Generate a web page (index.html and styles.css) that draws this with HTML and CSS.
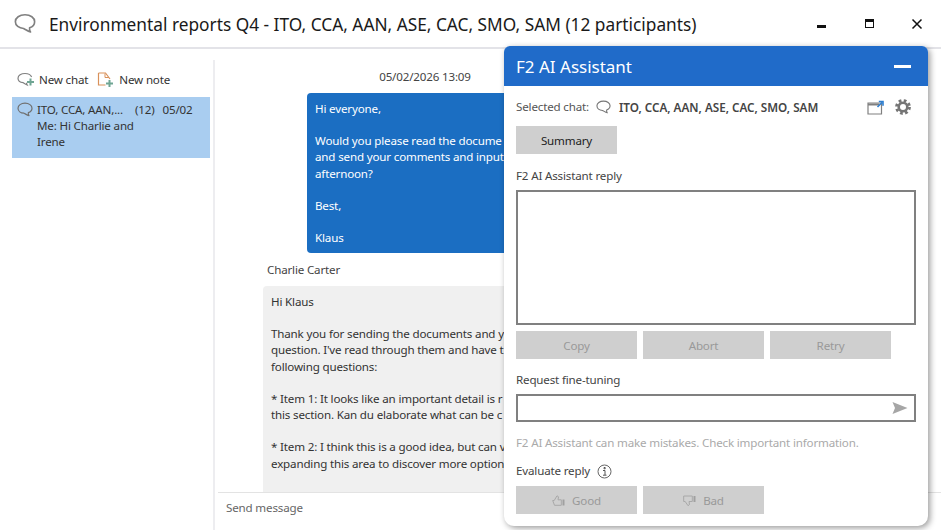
FILE: index.html
```html
<!DOCTYPE html>
<html lang="en">
<head>
<meta charset="utf-8">
<title>Environmental reports Q4</title>
<link rel="stylesheet" href="styles.css">
</head>
<body>
<svg class="defs" width="0" height="0" aria-hidden="true">
  <symbol id="bubble" viewBox="0 0 24 22">
    <path d="M12 1.500C6 1.500 1.500 4.800 1.500 9s3.900 7.300 9 7.500c2.200 1.200 5 3.200 7.500 3.800-1-1.300-1.200-3-1-4.600 3.700-1.300 5.500-3.700 5.500-6.700C22.500 4.800 18 1.500 12 1.500z" fill="none" stroke="currentColor" stroke-width="1.800" stroke-linejoin="round"/>
  </symbol>
</svg>
<div class="app">
  <header class="titlebar">
    <svg class="title-icon"><use href="#bubble"/></svg>
    <h1 class="title">Environmental reports Q4 - ITO, CCA, AAN, ASE, CAC, SMO, SAM (12 participants)</h1>
    <div class="window-controls">
      <span class="win-btn"><span class="win-min"></span></span>
      <span class="win-btn"><span class="win-max"></span></span>
      <span class="win-btn">
        <svg width="12" height="12" viewBox="0 0 12 12"><path d="M1.500 1.500l9 9M10.500 1.500l-9 9" stroke="#111" stroke-width="1.500" fill="none"/></svg>
      </span>
    </div>
  </header>
  <div class="main">
    <aside class="sidebar">
      <div class="toolbar">
        <span class="tool">
          <svg class="tool-icon" viewBox="0 0 18 16">
            <path d="M8 1.500C4.200 1.500 1 3.500 1 6.300c0 2.400 2.300 4.200 5.200 4.400 1.200.8 2.600 1.800 4 2.300-.5-.8-.7-1.500-.6-2.300" fill="none" stroke="#808080" stroke-width="1.200"/>
            <path d="M8 1.500c3.200 0 5.800 1.400 6.600 3.500" fill="none" stroke="#808080" stroke-width="1.200"/>
            <path d="M13.500 6.500v7M10 10h7" stroke="#6fa593" stroke-width="2"/>
          </svg>
          New chat
        </span>
        <span class="tool">
          <svg class="tool-icon" viewBox="0 0 18 16">
            <path d="M1.500 1v12h7M1.500 1h7l3 4 1.500 2" fill="none" stroke="#d9915a" stroke-width="1.200"/>
            <path d="M8 1.500v4h4" fill="none" stroke="#d9915a" stroke-width="1"/>
            <path d="M12.500 8v7M9 11.500h7" stroke="#6fa593" stroke-width="2"/>
          </svg>
          New note
        </span>
      </div>
      <div class="chat-item">
        <svg class="item-icon"><use href="#bubble"/></svg>
        <div class="item-body">
          <div class="item-head"><span class="item-name">ITO, CCA, AAN,...</span><span>(12)</span><span>05/02</span></div>
          <div class="item-preview">Me: Hi Charlie and<br>Irene</div>
        </div>
      </div>
    </aside>
    <section class="chat">
      <div class="messages">
        <div class="timestamp">05/02/2026 13:09</div>
        <div class="bubble bubble-me">Hi everyone,<br><br>Would you please read the docume<br>and send your comments and input<br>afternoon?<br><br>Best,<br><br>Klaus</div>
        <div class="sender">Charlie Carter</div>
        <div class="bubble bubble-other">Hi Klaus<br><br>Thank you for sending the documents and y<br>question. I've read through them and have t<br>following questions:<br><br>* Item 1: It looks like an important detail is r<br>this section. Kan du elaborate what can be c<br><br>* Item 2: I think this is a good idea, but can v<br>expanding this area to discover more option<br><br>* Item 3: How would we go about making this w</div>
      </div>
      <div class="composer">Send message</div>
    </section>
  </div>
  <section class="assistant">
    <div class="assistant-head">
      <h2 class="assistant-title">F2 AI Assistant</h2>
      <span class="assistant-min"></span>
    </div>
    <div class="assistant-body">
      <div class="selected-row">
        <span class="selected-label">Selected chat:</span>
        <svg class="selected-icon"><use href="#bubble"/></svg>
        <span class="selected-name">ITO, CCA, AAN, ASE, CAC, SMO, SAM</span>
        <span class="selected-tools">
          <svg width="17" height="15" viewBox="0 0 17 15">
            <path d="M1 3h13.500v11H1z" fill="none" stroke="#808080" stroke-width="1.200"/>
            <path d="M1 3.500h11v2H1z" fill="#808080"/>
            <path d="M10.500 7L15 2.500M11.800 1.500H16V5.700" fill="none" stroke="#2f7fd0" stroke-width="1.600"/>
          </svg>
          <svg width="16" height="16" viewBox="0 0 16 16">
            <circle cx="8" cy="8" r="4.300" fill="none" stroke="#757575" stroke-width="2.600"/>
            <circle cx="8" cy="8" r="6.500" fill="none" stroke="#757575" stroke-width="2.800" stroke-dasharray="2.700 2.405"/>
          </svg>
        </span>
      </div>
      <div class="btn-row"><button class="btn btn-active" type="button">Summary</button></div>
      <div class="label label-reply">F2 AI Assistant reply</div>
      <div class="reply-box"></div>
      <div class="btn-row btn-row-actions">
        <button class="btn btn-wide" type="button">Copy</button>
        <button class="btn btn-wide" type="button">Abort</button>
        <button class="btn btn-wide" type="button">Retry</button>
      </div>
      <div class="label label-tune">Request fine-tuning</div>
      <div class="tune-box">
        <svg width="16" height="14" viewBox="0 0 16 14"><path d="M.500 1L15.500 7 .500 13l2.500-6z" fill="#a6a6a6"/></svg>
      </div>
      <div class="disclaimer">F2 AI Assistant can make mistakes. Check important information.</div>
      <div class="label label-eval">Evaluate reply
        <svg width="15" height="15" viewBox="0 0 15 15"><circle cx="7.500" cy="7.500" r="6.500" fill="none" stroke="#666" stroke-width="1"/><path d="M6 6.500h2v4.500M6 11.200h3.500M7 3.500h1.200v1.300H7z" fill="none" stroke="#555" stroke-width="1"/></svg>
      </div>
      <div class="btn-row btn-row-eval">
        <button class="btn btn-wide" type="button">
          <svg class="thumb" width="13" height="12" viewBox="0 0 13 12"><path d="M.700 5.500h1.500L5 .800l1.500 1-.5 3h3.300v5.500H2.500z" fill="none" stroke="#a8a8a8"/><path d="M10.500 4.500h2v6h-2z" fill="#a0a0a0"/></svg>
          Good
        </button>
        <button class="btn btn-wide" type="button">
          <svg class="thumb" width="13" height="12" viewBox="0 0 13 12"><path d="M.700 1h8.600v5.500H6l.5 3-1.500 1.200L2.200 6.500H.700z" fill="none" stroke="#a8a8a8"/><path d="M10.500 1h2v6h-2z" fill="#a0a0a0"/></svg>
          Bad
        </button>
      </div>
    </div>
  </section>
</div>
</body>
</html>
```
FILE: styles.css
```css
* { box-sizing: border-box; }
html, body { margin: 0; padding: 0; }
body {
  width: 941px;
  height: 530px;
  overflow: hidden;
  background: #fff;
  font-family: "Noto Sans", "Open Sans", sans-serif;
  font-size: 11.600px;
  letter-spacing: -0.170px;
  line-height: 16px;
  color: #333;
}
.defs { position: absolute; }
.app {
  position: relative;
  width: 941px;
  height: 530px;
  display: flex;
  flex-direction: column;
}
.titlebar {
  height: 49px;
  flex: none;
  display: flex;
  align-items: center;
  padding: 0 0 0 14px;
  border-bottom: 2px solid #e3e3e8;
}
.title-icon { width: 22px; height: 21px; color: #808080; flex: none; }
.title {
  margin: 0 0 0 13px;
  padding-top: 3px;
  font-size: 17.300px;
  letter-spacing: 0;
  font-weight: 400;
  color: #1a1a1a;
  white-space: nowrap;
  line-height: 24px;
}
.window-controls { margin-left: auto; display: flex; }
.win-btn { width: 48px; height: 24px; display: flex; align-items: center; justify-content: center; }
.win-min { width: 9px; height: 3px; background: #111; margin-top: 6px; }
.win-max { width: 9px; height: 9px; border: 1px solid #111; border-top-width: 3px; }
.main { flex: 1; display: flex; min-height: 0; padding-top: 11px; }
.sidebar { width: 215px; flex: none; border-right: 2px solid #ededf0; padding: 8px 3px 0 12px; }
.toolbar { display: flex; gap: 9px; padding-left: 5px; height: 24px; margin-bottom: 5px; }
.tool { display: flex; align-items: center; gap: 4px; white-space: nowrap; color: #333; }
.tool-icon { width: 18px; height: 16px; flex: none; }
.chat-item { background: #a9cdf0; height: 61px; display: flex; padding: 5px 0 0 5px; gap: 4px; }
.item-icon { width: 16px; height: 15px; color: #707070; flex: none; }
.item-body { flex: 1; color: #333; }
.item-head { display: flex; gap: 8px; white-space: nowrap; }
.item-name { width: 90px; }
.chat { flex: 1; min-width: 0; display: flex; flex-direction: column; }
.messages { flex: 1; min-height: 0; overflow: hidden; }
.timestamp { text-align: center; width: 420px; padding-top: 9px; height: 33px; color: #444; }
.bubble { white-space: nowrap; border-radius: 4px; padding: 8px 8px 0; line-height: 16.150px; }
.bubble-me { margin-left: 92px; background: #1b6ec2; color: #fff; width: 330px; height: 160px; }
.sender { margin: 9px 0 0 52px; height: 24px; color: #444; }
.bubble-other { margin-left: 48px; background: #f0f0f0; width: 330px; color: #333; padding-bottom: 8px; }
.composer { height: 38px; flex: none; margin-left: 3px; border-top: 1px solid #e3e3e3; padding: 7px 8px; color: #666; }
.assistant {
  position: absolute;
  left: 504px;
  top: 46px;
  width: 424px;
  height: 480px;
  background: #fff;
  border-radius: 6px 6px 10px 10px;
  box-shadow: 2px 2px 6px rgba(0,0,0,.4);
  display: flex;
  flex-direction: column;
}
.assistant-head {
  height: 40px;
  flex: none;
  background: #206bc9;
  border-radius: 6px 6px 0 0;
  display: flex;
  align-items: center;
  padding: 2px 17px 0 12px;
  justify-content: space-between;
}
.assistant-title { margin: 0; font-size: 17px; font-weight: 400; letter-spacing: 0; color: #fff; line-height: 24px; }
.assistant-min { width: 17px; height: 3px; background: #fff; margin-top: -2px; }
.assistant-body { padding: 0 12px; flex: 1; }
.selected-row { height: 40px; display: flex; align-items: center; padding-top: 2px; }
.selected-label { color: #555; white-space: nowrap; }
.selected-icon { width: 15px; height: 14px; margin: 0 8px 0 7px; color: #777; flex: none; }
.selected-name { font-weight: 600; font-size: 11.700px; letter-spacing: 0; color: #444; white-space: nowrap; }
.selected-tools { margin-left: auto; display: flex; align-items: center; gap: 11px; padding-right: 5px; }
.btn-row { display: flex; gap: 6px; }
.btn {
  width: 101px;
  height: 28px;
  padding: 2px 0 0;
  border: 0;
  background: #cfcfcf;
  font: inherit;
  letter-spacing: inherit;
  color: #999;
  display: flex;
  align-items: center;
  justify-content: center;
  gap: 7px;
}
.btn-active { color: #222; }
.btn-wide { width: 121px; }
.label { color: #444; white-space: nowrap; height: 16px; }
.label-reply { margin-top: 14px; }
.reply-box { margin-top: 6px; width: 400px; height: 135px; border: 2px solid #808080; background: #fff; }
.btn-row-actions { margin-top: 6px; }
.label-tune { margin-top: 13px; }
.tune-box {
  margin-top: 6px;
  width: 400px;
  height: 28px;
  border: 2px solid #808080;
  display: flex;
  align-items: center;
  justify-content: flex-end;
  padding-right: 6px;
}
.disclaimer { margin-top: 13px; height: 16px; color: #aaa; white-space: nowrap; }
.label-eval { margin-top: 12px; display: flex; align-items: center; gap: 7px; }
.btn-row-eval { margin-top: 7px; }
```
